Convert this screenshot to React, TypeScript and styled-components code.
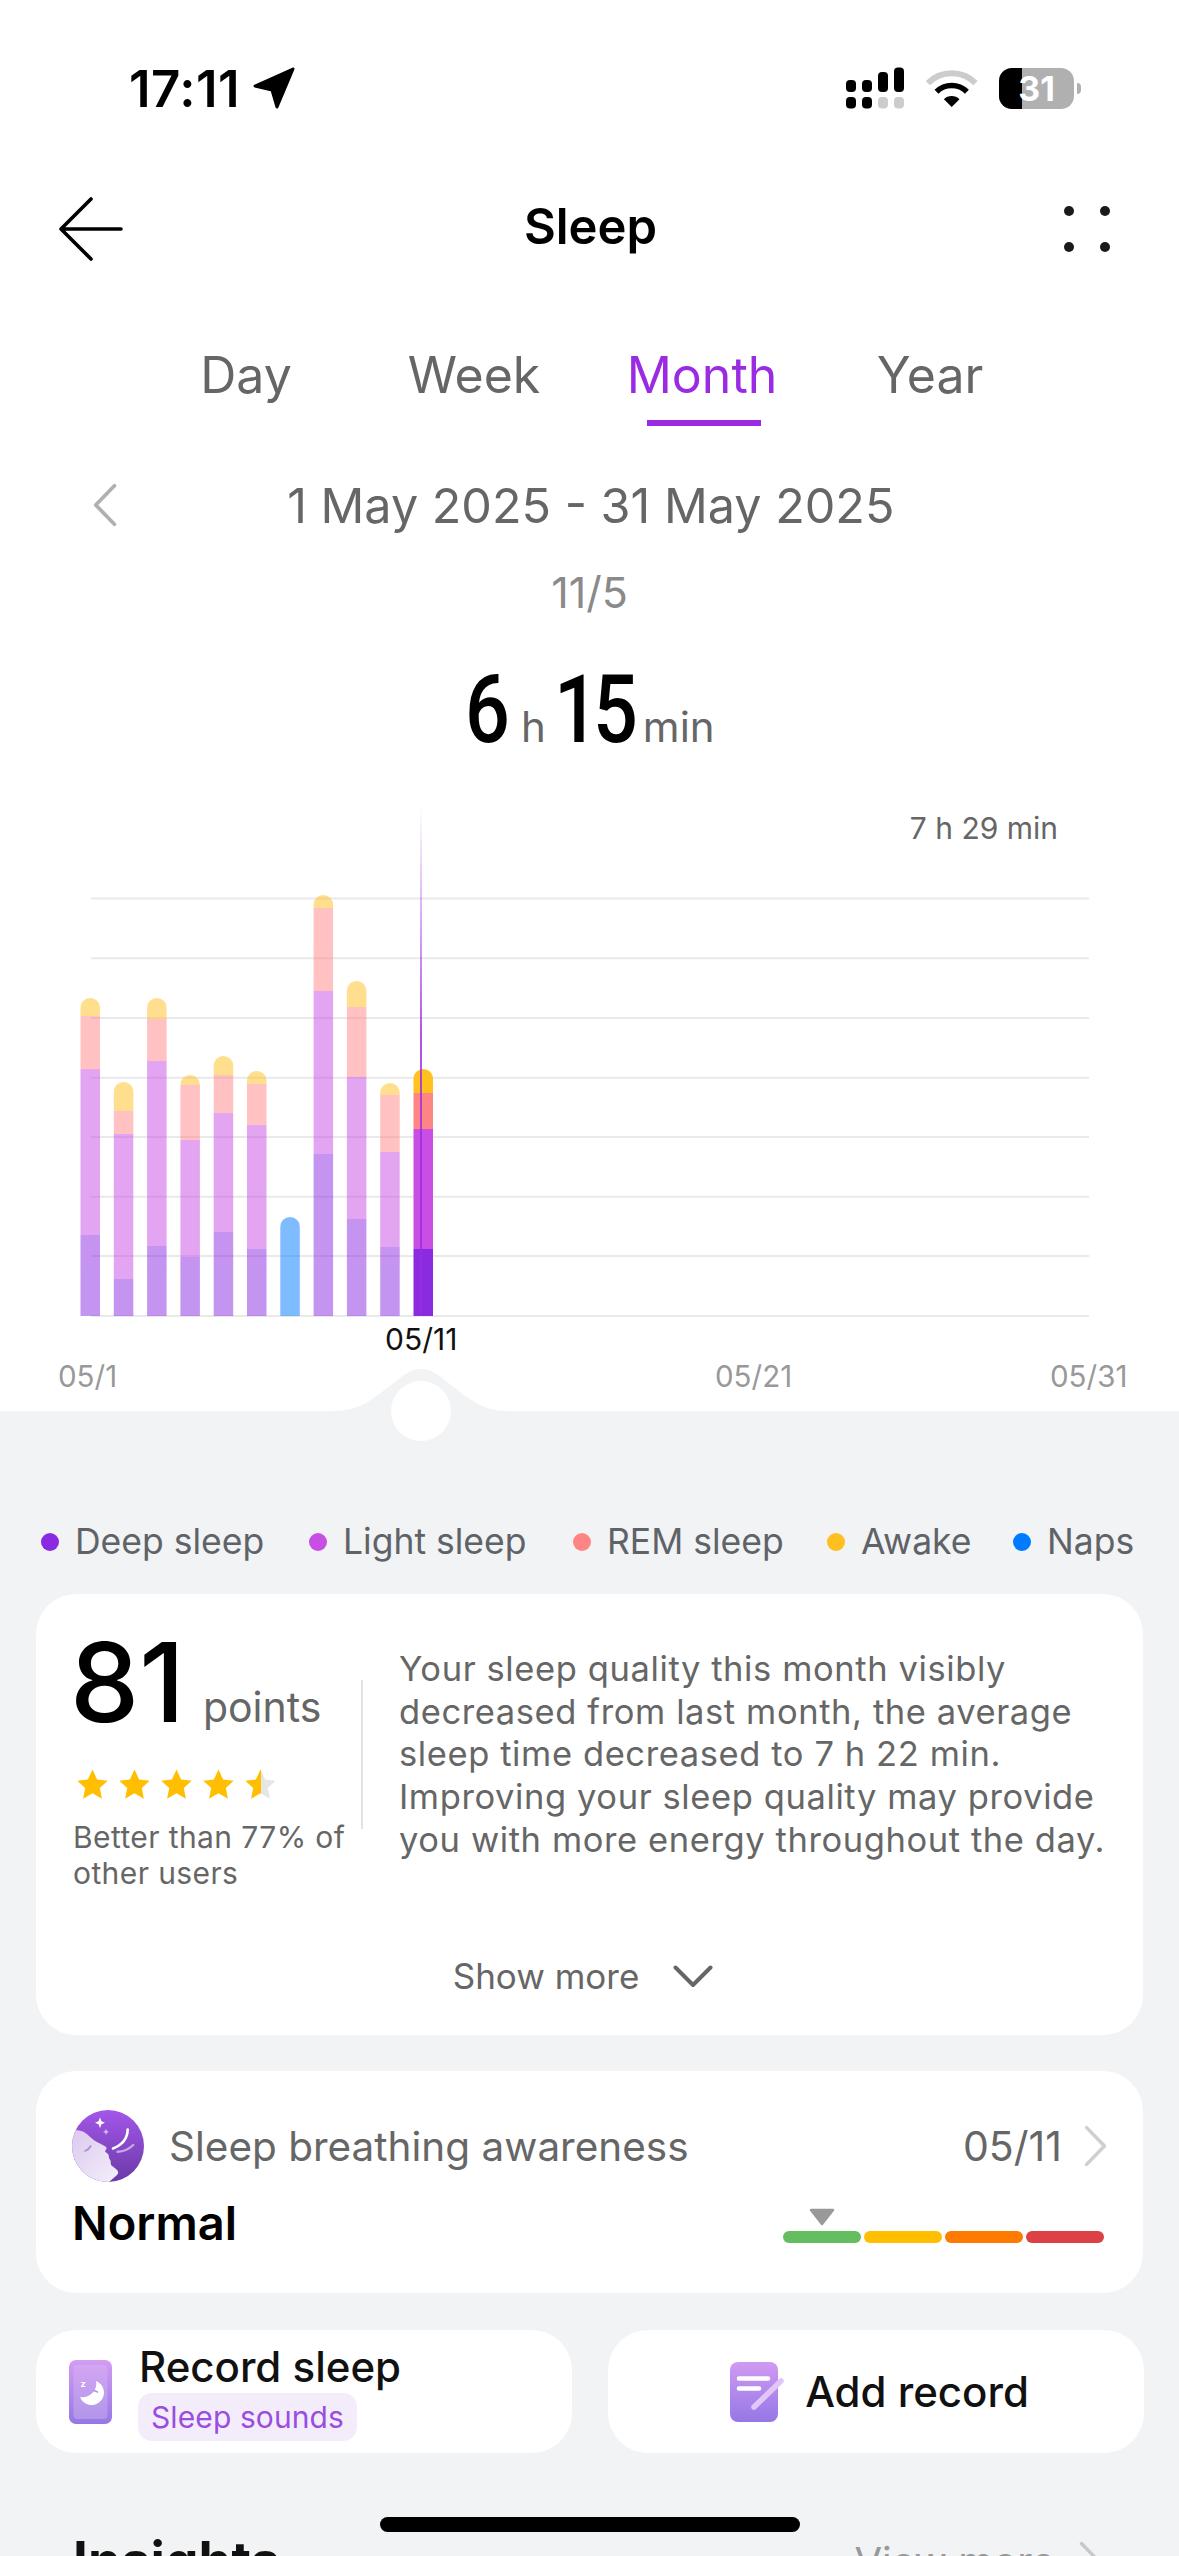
import React from 'react'
import styled, { createGlobalStyle } from 'styled-components'

const GlobalStyle = createGlobalStyle`
  html, body {
    margin: 0;
    padding: 0;
    background: #fff;
  }
  * {
    box-sizing: border-box;
  }
`

const Screen = styled.div`
  position: relative;
  width: 1179px;
  height: 2556px;
  overflow: hidden;
  background: #fff;
  font-family: Inter, 'Liberation Sans', sans-serif;
  color: #666;
`

const StatusBar = styled.div`
  height: 176px;
  display: flex;
  align-items: center;
  justify-content: space-between;
  padding: 0 98px 0 129px;
`

const StatusLeft = styled.div`
  display: flex;
  align-items: center;
  gap: 11px;
`

const Clock = styled.span`
  font-size: 51px;
  font-weight: 600;
  letter-spacing: 0.5px;
  color: #000;
`

const StatusRight = styled.div`
  display: flex;
  align-items: center;
  gap: 21px;
`

const Battery = styled.div`
  position: relative;
  width: 75px;
  height: 41px;
  border-radius: 13px;
  background: #b0b0b0;
  overflow: hidden;
  display: flex;
  align-items: center;
  justify-content: center;
`

const BatteryFill = styled.div`
  position: absolute;
  left: 0;
  top: 0;
  bottom: 0;
  background: #000;
`

const BatteryLevel = styled.span`
  position: relative;
  font-size: 34px;
  font-weight: 700;
  color: #fff;
`

const BatteryWrap = styled.div`
  display: flex;
  align-items: center;
  gap: 3px;
`

const BatteryTip = styled.div`
  width: 4px;
  height: 11px;
  border-radius: 0 6px 6px 0;
  background: #b0b0b0;
`

const NavBar = styled.div`
  height: 106px;
  display: flex;
  align-items: center;
  justify-content: space-between;
  padding: 0 69px 0 58px;
`

const NavTitle = styled.div`
  font-size: 49px;
  font-weight: 600;
  color: #000;
  margin: 0 0 5px -7px;
`

const MoreDots = styled.div`
  width: 46px;
  height: 46px;
  display: grid;
  grid-template-columns: 10px 10px;
  grid-template-rows: 10px 10px;
  justify-content: space-between;
  align-content: space-between;
`

const Dot = styled.span`
  border-radius: 50%;
  background: #1a1a1a;
`

const Tabs = styled.div`
  margin-top: 60px;
  height: 84px;
  padding-left: 132px;
  display: grid;
  grid-template-columns: repeat(4, 228px);
`

const Tab = styled.div<{ $active?: boolean }>`
  display: flex;
  flex-direction: column;
  align-items: center;
  justify-content: space-between;
  font-size: 50px;
  line-height: 66px;
  color: ${p => (p.$active ? '#9a2be2' : '#666')};
`

const TabLine = styled.div`
  width: 114px;
  height: 6px;
  margin-left: 4px;
  background: #9a2be2;
`

const DateRow = styled.div`
  margin-top: 34px;
  height: 90px;
  padding-left: 93px;
  display: flex;
  align-items: center;
`

const DateText = styled.span`
  margin-left: 170px;
  font-size: 48.5px;
  color: #666;
`

const SubDate = styled.div`
  margin-top: 12px;
  height: 60px;
  line-height: 60px;
  text-align: center;
  font-size: 43px;
  color: #8a8a8a;
`

const Duration = styled.div`
  margin-top: 38px;
  height: 100px;
  padding-left: 465px;
  display: flex;
  align-items: flex-end;
  color: #666;
`

const BigNumber = styled.span<{ $w: number }>`
  display: inline-block;
  flex: none;
  width: ${p => p.$w}px;
  font-family: Roboto, Inter, sans-serif;
  font-size: 94px;
  line-height: 100px;
  font-weight: 500;
  letter-spacing: -7px;
  white-space: nowrap;
  color: #000;
  transform: scaleX(0.84);
  transform-origin: left bottom;
`

const Unit = styled.span<{ $left: number; $right: number }>`
  margin: 0 ${p => p.$right}px 12px ${p => p.$left}px;
  font-size: 42px;
  line-height: 43px;
`

const ChartWrap = styled.div`
  position: relative;
  margin-top: 46px;
  height: 514px;
`

const ChartSvg = styled.svg`
  display: block;
`

const MaxLabel = styled.span`
  position: absolute;
  top: 4px;
  right: 121px;
  font-size: 30px;
  line-height: 36px;
  color: #666;
`

const SelectedDate = styled.div`
  height: 38px;
  padding-left: 385px;
  font-size: 30px;
  line-height: 38px;
  color: #111;
`

const AxisRow = styled.div`
  height: 53px;
  padding-left: 58px;
  display: grid;
  grid-template-columns: 657px 335px auto;
  font-size: 29.5px;
  line-height: 36px;
  color: #999;
`

const Lower = styled.div`
  position: relative;
  height: 1200px;
  padding-top: 109px;
  background: #f1f3f5;
`

const Hump = styled.svg`
  position: absolute;
  left: 321px;
  top: -42px;
`

const Knob = styled.div`
  position: absolute;
  left: 391px;
  top: -30px;
  width: 60px;
  height: 60px;
  border-radius: 50%;
  background: #fff;
`

const Legend = styled.div`
  height: 40px;
  padding-left: 41px;
  display: grid;
  grid-template-columns: 268px 264px 254px 186px auto;
  align-items: center;
`

const LegendItem = styled.div`
  display: flex;
  align-items: center;
  gap: 16px;
  font-size: 35.5px;
  white-space: nowrap;
  color: #5f6368;
`

const LegendDot = styled.span<{ $color: string }>`
  width: 18px;
  height: 18px;
  border-radius: 50%;
  background: ${p => p.$color};
`

const Card = styled.div`
  margin: 0 36px;
  background: #fff;
  border-radius: 40px;
`

const ScoreCard = styled(Card)`
  margin-top: 34px;
  height: 441px;
  padding: 32px 0 0 37px;
  display: flex;
  flex-direction: column;
`

const ScoreBody = styled.div`
  display: flex;
  align-items: flex-start;
`

const ScoreLeft = styled.div`
  width: 288px;
`

const ScoreLine = styled.div`
  display: flex;
  align-items: baseline;
  gap: 18px;
  height: 112px;
  margin-left: -3px;
  white-space: nowrap;
`

const ScoreValue = styled.span`
  font-size: 110px;
  line-height: 112px;
  font-weight: 500;
  color: #000;
`

const ScoreUnit = styled.span`
  font-size: 41px;
  color: #666;
`

const StarRow = styled.div`
  margin-top: 30px;
  height: 30px;
  padding-left: 3px;
  display: flex;
  gap: 9px;
`

const Better = styled.div`
  margin-top: 21px;
  font-size: 30px;
  line-height: 36px;
  letter-spacing: 0.4px;
  white-space: nowrap;
  color: #666;
`

const VDivider = styled.div`
  flex: none;
  width: 2px;
  height: 149px;
  margin-top: 54px;
  background: #e3e3e3;
`

const Summary = styled.div`
  margin-left: 36px;
  margin-top: 22px;
  font-size: 34.5px;
  line-height: 42.7px;
  letter-spacing: 0.6px;
  white-space: nowrap;
  color: #666;
`

const ShowMore = styled.div`
  margin-top: auto;
  height: 50px;
  margin-bottom: 34px;
  padding-right: 50px;
  display: flex;
  align-items: center;
  justify-content: center;
  gap: 34px;
  font-size: 35px;
  color: #666;
`

const BreathCard = styled(Card)`
  margin-top: 36px;
  height: 222px;
  padding: 39px 36px 0 36px;
`

const BreathTop = styled.div`
  display: flex;
  align-items: center;
`

const BreathTitle = styled.span`
  margin-left: 25px;
  font-size: 40.5px;
  color: #666;
`

const BreathDate = styled.span`
  margin-left: auto;
  font-size: 41px;
  color: #666;
`

const BreathArrow = styled.span`
  margin-left: 22px;
  display: flex;
`

const BreathBottom = styled.div`
  display: flex;
  justify-content: space-between;
  align-items: flex-start;
  margin-top: 8px;
`

const BreathState = styled.div`
  margin-top: 5px;
  font-size: 47px;
  line-height: 56px;
  font-weight: 600;
  color: #000;
`

const MeterBlock = styled.div`
  display: flex;
  flex-direction: column;
  margin: 18px 3px 0 0;
`

const MeterMark = styled.svg`
  display: block;
  margin: 0 0 5px 26px;
`

const Meter = styled.div`
  display: flex;
  gap: 3px;
`

const MeterPart = styled.span<{ $color: string }>`
  width: 78px;
  height: 12px;
  border-radius: 6px;
  background: ${p => p.$color};
`

const ActionRow = styled.div`
  margin: 37px 35px 0 36px;
  display: grid;
  grid-template-columns: 536px 536px;
  justify-content: space-between;
`

const ActionCard = styled.div<{ $center?: boolean }>`
  height: 123px;
  background: #fff;
  border-radius: 40px;
  display: flex;
  align-items: center;
  justify-content: ${p => (p.$center ? 'center' : 'flex-start')};
  padding-left: ${p => (p.$center ? '7px' : '33px')};
  gap: ${p => (p.$center ? '21px' : '27px')};
`

const ActionStack = styled.div`
  display: flex;
  flex-direction: column;
  align-items: flex-start;
`

const ActionTitle = styled.div`
  font-size: 42px;
  line-height: 50px;
  font-weight: 500;
  color: #111;
`

const SoundPill = styled.div`
  margin-top: 1px;
  margin-left: -1px;
  height: 48px;
  padding: 0 13px;
  display: flex;
  align-items: center;
  border-radius: 14px;
  background: #f3edfb;
  font-size: 30px;
  letter-spacing: 0.1px;
  color: #9b4de0;
`

const InsightRow = styled.div`
  margin-top: 76px;
  padding: 0 78px 0 73px;
  display: flex;
  justify-content: space-between;
  align-items: center;
`

const InsightTitle = styled.div`
  font-size: 53px;
  font-weight: 700;
  color: #111;
`

const ViewMore = styled.div`
  display: flex;
  align-items: center;
  gap: 24px;
  font-size: 40px;
  color: #999;
`

const HomeBar = styled.div`
  position: absolute;
  left: 380px;
  bottom: 24px;
  width: 420px;
  height: 15px;
  border-radius: 8px;
  background: #000;
`

type Sleep = { deep?: number; light?: number; rem?: number; awake?: number; nap?: number; active?: boolean }

const BASE = 510
const BAR_W = 19.5

const days: Sleep[] = [
  { deep: 81, light: 166, rem: 53, awake: 18 },
  { deep: 37, light: 145, rem: 23, awake: 29 },
  { deep: 70, light: 185, rem: 42, awake: 21 },
  { deep: 59, light: 117, rem: 55, awake: 10 },
  { deep: 84, light: 119, rem: 38, awake: 19 },
  { deep: 67, light: 124, rem: 41, awake: 13 },
  { nap: 99 },
  { deep: 162, light: 163, rem: 83, awake: 13 },
  { deep: 97, light: 142, rem: 70, awake: 26 },
  { deep: 69, light: 95, rem: 57, awake: 12 },
  { deep: 67, light: 120, rem: 36, awake: 24, active: true },
]

const stageColors: Record<string, string> = {
  deep: '#8a2be2',
  light: '#c84ee4',
  rem: '#ff8585',
  awake: '#ffc020',
  nap: '#007aff',
}

const gridYs = [92.6, 152.3, 212, 271.7, 331, 390.8, 450, 510]

function Bar({ day, index }: { day: Sleep; index: number }) {
  const x = 80.5 + index * 33.3
  const stages = (['deep', 'light', 'rem', 'awake', 'nap'] as const).filter(s => day[s])
  let y = BASE
  return (
    <g opacity={day.active ? 1 : 0.5}>
      {stages.map((s, i) => {
        const h = day[s] as number
        y -= h
        const last = i === stages.length - 1
        const r = BAR_W / 2
        const d = last
          ? `M${x} ${y + h}V${y + r}A${r} ${r} 0 0 1 ${x + BAR_W} ${y + r}V${y + h}Z`
          : `M${x} ${y + h}V${y}H${x + BAR_W}V${y + h}Z`
        return <path key={s} d={d} fill={stageColors[s]} />
      })}
    </g>
  )
}

function SleepChart() {
  return (
    <ChartSvg width="1179" height="514" viewBox="0 0 1179 514">
      <defs>
        <linearGradient id="cursorFade" x1="0" y1="0" x2="0" y2="1">
          <stop offset="0" stopColor="#9a2be2" stopOpacity="0" />
          <stop offset="0.45" stopColor="#9a2be2" />
          <stop offset="1" stopColor="#9a2be2" />
        </linearGradient>
      </defs>
      {gridYs.map(y => (
        <line key={y} x1="91" x2="1089" y1={y} y2={y} stroke="#e9e9ea" strokeWidth="2" />
      ))}
      {days.map((d, i) => (
        <Bar key={i} day={d} index={i} />
      ))}
      <rect x="420.2" y="0" width="1.6" height="510" fill="url(#cursorFade)" />
    </ChartSvg>
  )
}

function Star({ half }: { half?: boolean }) {
  const id = half ? 'starHalf' : undefined
  return (
    <svg width="33" height="32" viewBox="0 0 33 32">
      {half && (
        <defs>
          <linearGradient id="starHalf" x1="0" x2="1" y1="0" y2="0">
            <stop offset="0.5" stopColor="#ffbf00" />
            <stop offset="0.5" stopColor="#e6e6e6" />
          </linearGradient>
        </defs>
      )}
      <path
        d="M16.5 1.5l4.6 9.9 10.6 1.3-7.9 7.3 2.1 10.7-9.4-5.4-9.4 5.4 2.1-10.7-7.9-7.3 10.6-1.3z"
        fill={id ? `url(#${id})` : '#ffbf00'}
      />
    </svg>
  )
}

function BreathIcon() {
  return (
    <svg width="72" height="72" viewBox="0 0 72 72">
      <defs>
        <linearGradient id="breathBg" x1="0" y1="0" x2="0" y2="1">
          <stop offset="0" stopColor="#a356e9" />
          <stop offset="1" stopColor="#6b3aa8" />
        </linearGradient>
        <linearGradient id="breathFace" x1="0" y1="0" x2="1" y2="1">
          <stop offset="0" stopColor="#dcc9ef" />
          <stop offset="1" stopColor="#f4eff9" />
        </linearGradient>
        <clipPath id="breathClip">
          <circle cx="36" cy="36" r="36" />
        </clipPath>
      </defs>
      <circle cx="36" cy="36" r="36" fill="url(#breathBg)" />
      <path
        d="M0 20.5C5 20 9 20.5 12 22C17 25 20 30 27 33C31 35 34 36.5 34.7 38L33 41.5L36.5 44.5L37 48L38.5 50.5L39 55L44 59C46.5 61 47 63 45 65L37 72H0Z"
        fill="url(#breathFace)"
        clipPath="url(#breathClip)"
      />
      <path d="M28 7.5L29.5 11.2L33 12.7L29.5 14.2L28 18L26.5 14.2L23 12.7L26.5 11.2Z" fill="#fff" />
      <path d="M34 18.7L35 21L37 21.8L35 22.7L34 25L33 22.7L31 21.8L33 21Z" fill="#d7b8f3" />
      <path d="M55.7 19.5C55.5 28 50 35 41 38.5" fill="none" stroke="#fff" strokeWidth="2.6" strokeLinecap="round" />
      <path d="M45.5 41.8C51 41.7 57 39 61.2 35" fill="none" stroke="#c8a9e8" strokeWidth="2.4" strokeLinecap="round" />
      <path d="M13 41C15.5 40 17.5 38.5 18.7 36" fill="none" stroke="#b18fd6" strokeWidth="1.8" strokeLinecap="round" />
    </svg>
  )
}

function PhoneIcon() {
  return (
    <svg width="43" height="64" viewBox="0 0 43 64">
      <defs>
        <linearGradient id="phoneBg" x1="0" y1="0" x2="0" y2="1">
          <stop offset="0" stopColor="#d39df2" />
          <stop offset="1" stopColor="#9777e6" />
        </linearGradient>
        <linearGradient id="phoneIn" x1="0" y1="0" x2="0" y2="1">
          <stop offset="0" stopColor="#d4a5f3" />
          <stop offset="1" stopColor="#b096e9" />
        </linearGradient>
      </defs>
      <rect width="43" height="64" rx="7" fill="url(#phoneBg)" />
      <rect x="4.5" y="5" width="34" height="54" rx="4" fill="url(#phoneIn)" />
      <path d="M27 21A12.4 12.4 0 1 1 11 37C20 38.5 29 31 27 21Z" fill="#fff" />
      <path d="M25 30.5L28.5 32" stroke="#b78fea" strokeWidth="1.6" strokeLinecap="round" />
      <text x="11.5" y="27" fontSize="9" fontWeight="700" fontFamily="Inter, sans-serif" fill="#fff">z</text>
    </svg>
  )
}

function NoteIcon() {
  return (
    <svg width="54" height="60" viewBox="0 0 54 60">
      <defs>
        <linearGradient id="noteBg" x1="0" y1="0" x2="0" y2="1">
          <stop offset="0" stopColor="#d09af2" />
          <stop offset="1" stopColor="#9577e6" />
        </linearGradient>
      </defs>
      <rect width="48" height="60" rx="8" fill="url(#noteBg)" />
      <path d="M9 16.5H38M9 26.5H29" stroke="#fff" strokeWidth="4.6" strokeLinecap="round" fill="none" />
      <path d="M24 45L51 19" stroke="#e2c6fa" strokeWidth="5.6" strokeLinecap="round" fill="none" />
    </svg>
  )
}

function ChevronRight({ h, color }: { h: number; color: string }) {
  return (
    <svg width={h * 0.55} height={h} viewBox="0 0 22 40">
      <path d="M2.5 2.5L19.5 20L2.5 37.5" fill="none" stroke={color} strokeWidth="3.4" strokeLinecap="round" strokeLinejoin="round" />
    </svg>
  )
}

function ChevronLeft({ h, color }: { h: number; color: string }) {
  return (
    <svg width={h * 0.55} height={h} viewBox="0 0 22 40">
      <path d="M19.5 2.5L2.5 20L19.5 37.5" fill="none" stroke={color} strokeWidth="3.4" strokeLinecap="round" strokeLinejoin="round" />
    </svg>
  )
}

export default function App() {
  return (
    <Screen>
      <GlobalStyle />
      <StatusBar>
        <StatusLeft>
          <Clock>17:11</Clock>
          <svg width="45" height="44" viewBox="0 0 45 44">
            <path d="M42 3L4 20L21 24L26 41Z" fill="#000" stroke="#000" strokeWidth="3" strokeLinejoin="round" />
          </svg>
        </StatusLeft>
        <StatusRight>
          <svg width="58" height="42" viewBox="0 0 58 42">
            <rect x="0" y="13" width="10" height="12" rx="4" fill="#000" />
            <rect x="16" y="13" width="10" height="12" rx="4" fill="#000" />
            <rect x="32" y="5" width="10" height="20" rx="4" fill="#000" />
            <rect x="48" y="0.5" width="10" height="24.5" rx="4" fill="#000" />
            <rect x="0" y="30" width="10" height="11.5" rx="4" fill="#000" />
            <rect x="16" y="30" width="10" height="11.5" rx="4" fill="#000" />
            <rect x="32" y="30" width="10" height="11.5" rx="4" fill="#ccc" />
            <rect x="48" y="30" width="10" height="11.5" rx="4" fill="#ccc" />
          </svg>
          <svg width="53" height="42" viewBox="0 0 53 42">
            <path d="M2.9 16.2A33.7 33.7 0 0 1 50.5 16.2" fill="none" stroke="#ccc" strokeWidth="6" />
            <path d="M11.5 24.8A21.5 21.5 0 0 1 41.9 24.8" fill="none" stroke="#000" strokeWidth="5.5" />
            <path d="M26.7 40L18.9 32.2A11 11 0 0 1 34.5 32.2Z" fill="#000" />
          </svg>
          <BatteryWrap>
            <Battery>
              <BatteryFill style={{ width: `${(23 / 75) * 100}%` }} />
              <BatteryLevel>31</BatteryLevel>
            </Battery>
            <BatteryTip />
          </BatteryWrap>
        </StatusRight>
      </StatusBar>

      <NavBar>
        <svg width="66" height="66" viewBox="0 0 66 66">
          <path d="M33 3L3 33L33 63M3 33H63" fill="none" stroke="#000" strokeWidth="3.6" strokeLinecap="round" strokeLinejoin="round" />
        </svg>
        <NavTitle>Sleep</NavTitle>
        <MoreDots>
          <Dot />
          <Dot />
          <Dot />
          <Dot />
        </MoreDots>
      </NavBar>

      <Tabs>
        <Tab>Day</Tab>
        <Tab>Week</Tab>
        <Tab $active>
          Month
          <TabLine />
        </Tab>
        <Tab>Year</Tab>
      </Tabs>

      <DateRow>
        <ChevronLeft h={44} color="#b0b0b0" />
        <DateText>1 May 2025 - 31 May 2025</DateText>
      </DateRow>
      <SubDate>11/5</SubDate>

      <Duration>
        <BigNumber $w={48}>6</BigNumber>
        <Unit $left={8} $right={8}>h</Unit>
        <BigNumber $w={85}>15</BigNumber>
        <Unit $left={4} $right={0}>min</Unit>
      </Duration>

      <ChartWrap>
        <SleepChart />
        <MaxLabel>7 h 29 min</MaxLabel>
      </ChartWrap>
      <SelectedDate>05/11</SelectedDate>
      <AxisRow>
        <span>05/1</span>
        <span>05/21</span>
        <span>05/31</span>
      </AxisRow>

      <Lower>
        <Hump width="200" height="42" viewBox="0 0 200 42">
          <path d="M0 42H12C40 42 54 28 70 16C84 5 90 0 100 0C110 0 116 5 130 16C146 28 160 42 188 42H200Z" fill="#f1f3f5" />
        </Hump>
        <Knob />

        <Legend>
          <LegendItem><LegendDot $color="#8a2be2" />Deep sleep</LegendItem>
          <LegendItem><LegendDot $color="#c84ee4" />Light sleep</LegendItem>
          <LegendItem><LegendDot $color="#ff8585" />REM sleep</LegendItem>
          <LegendItem><LegendDot $color="#ffbf1f" />Awake</LegendItem>
          <LegendItem><LegendDot $color="#007aff" />Naps</LegendItem>
        </Legend>

        <ScoreCard>
          <ScoreBody>
            <ScoreLeft>
              <ScoreLine>
                <ScoreValue>81</ScoreValue>
                <ScoreUnit>points</ScoreUnit>
              </ScoreLine>
              <StarRow>
                <Star />
                <Star />
                <Star />
                <Star />
                <Star half />
              </StarRow>
              <Better>
                Better than 77% of
                <br />
                other users
              </Better>
            </ScoreLeft>
            <VDivider />
            <Summary>
              Your sleep quality this month visibly
              <br />
              decreased from last month, the average
              <br />
              sleep time decreased to 7 h 22 min.
              <br />
              Improving your sleep quality may provide
              <br />
              you with more energy throughout the day.
            </Summary>
          </ScoreBody>
          <ShowMore>
            Show more
            <svg width="40" height="23" viewBox="0 0 40 23">
              <path d="M2.5 2.5L20 20L37.5 2.5" fill="none" stroke="#666" strokeWidth="4" strokeLinecap="round" strokeLinejoin="round" />
            </svg>
          </ShowMore>
        </ScoreCard>

        <BreathCard>
          <BreathTop>
            <BreathIcon />
            <BreathTitle>Sleep breathing awareness</BreathTitle>
            <BreathDate>05/11</BreathDate>
            <BreathArrow>
              <ChevronRight h={42} color="#cfcfcf" />
            </BreathArrow>
          </BreathTop>
          <BreathBottom>
            <BreathState>Normal</BreathState>
            <MeterBlock>
              <MeterMark width="26" height="18" viewBox="0 0 26 18">
                <path d="M2 2H24L13 16Z" fill="#999" stroke="#999" strokeWidth="2.5" strokeLinejoin="round" />
              </MeterMark>
              <Meter>
                <MeterPart $color="#64bd5f" />
                <MeterPart $color="#ffbf00" />
                <MeterPart $color="#ff7a00" />
                <MeterPart $color="#dc4245" />
              </Meter>
            </MeterBlock>
          </BreathBottom>
        </BreathCard>

        <ActionRow>
          <ActionCard>
            <PhoneIcon />
            <ActionStack>
              <ActionTitle>Record sleep</ActionTitle>
              <SoundPill>Sleep sounds</SoundPill>
            </ActionStack>
          </ActionCard>
          <ActionCard $center>
            <NoteIcon />
            <ActionTitle>Add record</ActionTitle>
          </ActionCard>
        </ActionRow>

        <InsightRow>
          <InsightTitle>Insights</InsightTitle>
          <ViewMore>
            View more
            <ChevronRight h={40} color="#c8c8c8" />
          </ViewMore>
        </InsightRow>
      </Lower>
      <HomeBar />
    </Screen>
  )
}
